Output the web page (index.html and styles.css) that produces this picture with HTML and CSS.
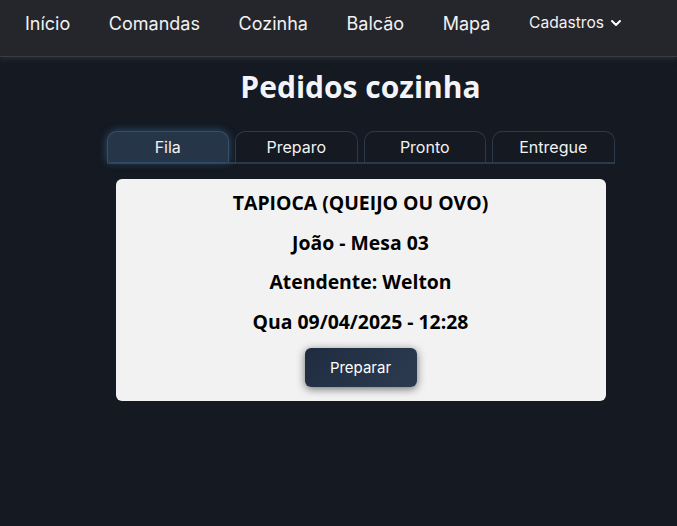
FILE: index.html
```html
<!DOCTYPE html>
<html lang="pt-BR">
<head>
<meta charset="utf-8">
<title>Pedidos cozinha</title>
<link rel="stylesheet" href="styles.css">
</head>
<body>
<nav class="navbar">
  <a class="nav-link" href="#">Início</a>
  <a class="nav-link" href="#">Comandas</a>
  <a class="nav-link" href="#">Cozinha</a>
  <a class="nav-link" href="#">Balcão</a>
  <a class="nav-link" href="#">Mapa</a>
  <a class="nav-link nav-drop" href="#">Cadastros
    <svg class="chev" width="12" height="8" viewBox="0 0 12 8"><path d="M2 2l4 4 4-4" fill="none" stroke="#fff" stroke-width="2" stroke-linecap="round" stroke-linejoin="round"/></svg>
  </a>
</nav>
<main class="content">
  <h1 class="title">Pedidos cozinha</h1>
  <div class="tabs">
    <button class="tab active">Fila</button>
    <button class="tab">Preparo</button>
    <button class="tab">Pronto</button>
    <button class="tab">Entregue</button>
  </div>
  <div class="card">
    <p class="line">TAPIOCA (QUEIJO OU OVO)</p>
    <p class="line">João - Mesa 03</p>
    <p class="line">Atendente: Welton</p>
    <p class="line">Qua 09/04/2025 - 12:28</p>
    <button class="btn">Preparar</button>
  </div>
</main>
</body>
</html>
```
FILE: styles.css
```css
* { box-sizing: border-box; }
html, body { margin: 0; padding: 0; }
body {
  background: #141922;
  font-family: Inter, "Liberation Sans", sans-serif;
  color: #fff;
  height: 526px;
  overflow: hidden;
}
.navbar {
  height: 57px;
  background: #25262b;
  border-bottom: 1px solid #3b3c41;
  display: flex;
  align-items: flex-start;
  padding: 13px 0 0 25px;
  gap: 38.6px;
  box-shadow: 0 2px 6px rgba(50, 52, 58, 0.8);
}
.nav-link {
  color: #f2f2f2;
  text-decoration: none;
  font-size: 18px;
  line-height: 22px;
}
.nav-drop {
  font-size: 15.6px;
  line-height: 20px;
  display: flex;
  align-items: center;
  gap: 6px;
}
.content {
  padding-left: 44px;
  display: flex;
  flex-direction: column;
  align-items: center;
}
.title {
  margin: 10px 0 0;
  font-family: "Open Sans", "Noto Sans", sans-serif;
  font-weight: 700;
  font-size: 30px;
  line-height: 40px;
  color: #f2f4f8;
}
.tabs {
  margin-top: 24px;
  width: 508px;
  display: flex;
  gap: 6px;
  border-bottom: 2px solid #2a3a4c;
}
.tab {
  flex: 1;
  height: 31px;
  background: #141922;
  border: 1px solid #2a3a4c;
  border-bottom: none;
  border-radius: 10px 10px 0 0;
  color: #f2f2f2;
  font-family: Inter, sans-serif;
  font-size: 16px;
  padding: 0;
}
.tab.active {
  background: #263548;
  border-color: #35506a;
  box-shadow: 0 0 8px rgba(70, 130, 180, 0.55);
}
.card {
  margin-top: 15px;
  width: 490px;
  background: #f2f2f2;
  border-radius: 6px;
  color: #000;
  display: flex;
  flex-direction: column;
  align-items: center;
  padding: 4px 0 14px;
}
.line {
  margin: 0;
  font-family: "Open Sans", "Noto Sans", sans-serif;
  font-weight: 700;
  font-size: 19.4px;
  line-height: 39.5px;
}
.btn {
  margin-top: 7px;
  width: 112px;
  height: 39px;
  border: none;
  border-radius: 6px;
  background: linear-gradient(135deg, #1f2c40, #2c3b50);
  color: #fff;
  font-family: Inter, sans-serif;
  font-size: 15px;
  box-shadow: 0 2px 8px rgba(0, 0, 0, 0.55);
}
```
